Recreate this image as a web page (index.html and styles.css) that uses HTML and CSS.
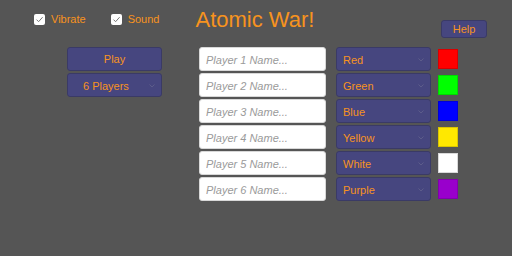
FILE: index.html
```html
<!DOCTYPE html>
<html lang="en">
<head>
  <meta charset="UTF-8" />
  <title>Atomic War!</title>
  <link rel="stylesheet" href="styles.css">
</head>
<body>
  <div class="header">
    <label class="check">
      <span class="box"><svg width="9" height="9" viewBox="0 0 9 9"><path d="M1.5 4.6 L3.6 6.7 L7.6 2.2" fill="none" stroke="#777" stroke-width="1"/></svg></span>
      Vibrate
    </label>
    <label class="check sound">
      <span class="box"><svg width="9" height="9" viewBox="0 0 9 9"><path d="M1.5 4.6 L3.6 6.7 L7.6 2.2" fill="none" stroke="#777" stroke-width="1"/></svg></span>
      Sound
    </label>
    <h1 class="title">Atomic War!</h1>
    <button class="btn help-btn">Help</button>
  </div>

  <div class="main">
    <div class="menu">
      <button class="btn play-btn">Play</button>
      <div class="select count-select">
        <span>6 Players</span>
        <svg class="chev" width="6" height="4" viewBox="0 0 6 4"><path d="M0.5 0.5 L3 3 L5.5 0.5" fill="none" stroke="#5c5c8a" stroke-width="1"/></svg>
      </div>
    </div>

    <div class="players">
      <div class="player">
        <input type="text" placeholder="Player 1 Name..." />
        <div class="select color-select"><span>Red</span><svg class="chev" width="6" height="4" viewBox="0 0 6 4"><path d="M0.5 0.5 L3 3 L5.5 0.5" fill="none" stroke="#5c5c8a" stroke-width="1"/></svg></div>
        <div class="swatch" style="background:#ff0000"></div>
      </div>
      <div class="player">
        <input type="text" placeholder="Player 2 Name..." />
        <div class="select color-select"><span>Green</span><svg class="chev" width="6" height="4" viewBox="0 0 6 4"><path d="M0.5 0.5 L3 3 L5.5 0.5" fill="none" stroke="#5c5c8a" stroke-width="1"/></svg></div>
        <div class="swatch" style="background:#00ff00"></div>
      </div>
      <div class="player">
        <input type="text" placeholder="Player 3 Name..." />
        <div class="select color-select"><span>Blue</span><svg class="chev" width="6" height="4" viewBox="0 0 6 4"><path d="M0.5 0.5 L3 3 L5.5 0.5" fill="none" stroke="#5c5c8a" stroke-width="1"/></svg></div>
        <div class="swatch" style="background:#0000ff"></div>
      </div>
      <div class="player">
        <input type="text" placeholder="Player 4 Name..." />
        <div class="select color-select"><span>Yellow</span><svg class="chev" width="6" height="4" viewBox="0 0 6 4"><path d="M0.5 0.5 L3 3 L5.5 0.5" fill="none" stroke="#5c5c8a" stroke-width="1"/></svg></div>
        <div class="swatch" style="background:#ffe800"></div>
      </div>
      <div class="player">
        <input type="text" placeholder="Player 5 Name..." />
        <div class="select color-select"><span>White</span><svg class="chev" width="6" height="4" viewBox="0 0 6 4"><path d="M0.5 0.5 L3 3 L5.5 0.5" fill="none" stroke="#5c5c8a" stroke-width="1"/></svg></div>
        <div class="swatch" style="background:#ffffff"></div>
      </div>
      <div class="player">
        <input type="text" placeholder="Player 6 Name..." />
        <div class="select color-select"><span>Purple</span><svg class="chev" width="6" height="4" viewBox="0 0 6 4"><path d="M0.5 0.5 L3 3 L5.5 0.5" fill="none" stroke="#5c5c8a" stroke-width="1"/></svg></div>
        <div class="swatch" style="background:#9900cc"></div>
      </div>
    </div>
  </div>
</body>
</html>
```

FILE: styles.css
```css
:root {
  --bg: #555555;
  --orange: #f7931e;
  --btn: #46467f;
  --btn-border: #3a3a66;
}

* {
  box-sizing: border-box;
}

body {
  margin: 0;
  width: 512px;
  height: 256px;
  background-color: var(--bg);
  font-family: 'Liberation Sans', Arial, sans-serif;
  font-size: 11px;
  color: var(--orange);
  overflow: hidden;
}

.header {
  display: flex;
  align-items: flex-start;
  height: 47px;
  padding-left: 34px;
}

.check {
  display: flex;
  align-items: flex-end;
  height: 11px;
  line-height: 12px;
  margin-top: 14px;
}

.check .box {
  display: flex;
  align-items: center;
  justify-content: center;
  width: 11px;
  height: 11px;
  margin-right: 6px;
  background: #fff;
  border-radius: 2px;
}

.sound {
  margin-left: 25px;
}

.title {
  margin: 9px 0 0 36px;
  font-size: 22px;
  line-height: 1;
  font-weight: normal;
  color: var(--orange);
}

.btn {
  font-family: inherit;
  font-size: 11px;
  color: var(--orange);
  background: var(--btn);
  border: 1px solid var(--btn-border);
  border-radius: 3px;
  padding: 0;
}

.help-btn {
  width: 46px;
  height: 18px;
  margin: 20px 25px 0 auto;
}

.main {
  display: flex;
  align-items: flex-start;
  padding-left: 67px;
}

.menu {
  display: flex;
  flex-direction: column;
  gap: 2px;
  width: 95px;
  margin-right: 37px;
}

.play-btn {
  height: 24px;
}

.select {
  display: flex;
  align-items: center;
  justify-content: space-between;
  height: 24px;
  padding-top: 1px;
  background: var(--btn);
  border: 1px solid var(--btn-border);
  border-radius: 3px;
  padding-right: 6px;
}

.count-select {
  padding-left: 15px;
}

.players {
  display: flex;
  flex-direction: column;
  gap: 2px;
}

.player {
  display: flex;
  align-items: center;
  height: 24px;
}

.player input {
  width: 127px;
  height: 24px;
  margin: 0 10px 0 0;
  padding: 1px 6px 0;
  border: 1px solid #d8d8d8;
  border-radius: 3px;
  background: #fff;
  font-family: inherit;
  font-size: 11px;
}

.player input::placeholder {
  color: #9a9a9a;
  font-style: italic;
}

.color-select {
  width: 95px;
  padding-left: 6px;
  margin-right: 7px;
}

.swatch {
  width: 20px;
  height: 20px;
  border: 1px solid rgba(0, 0, 0, 0.15);
}
```
